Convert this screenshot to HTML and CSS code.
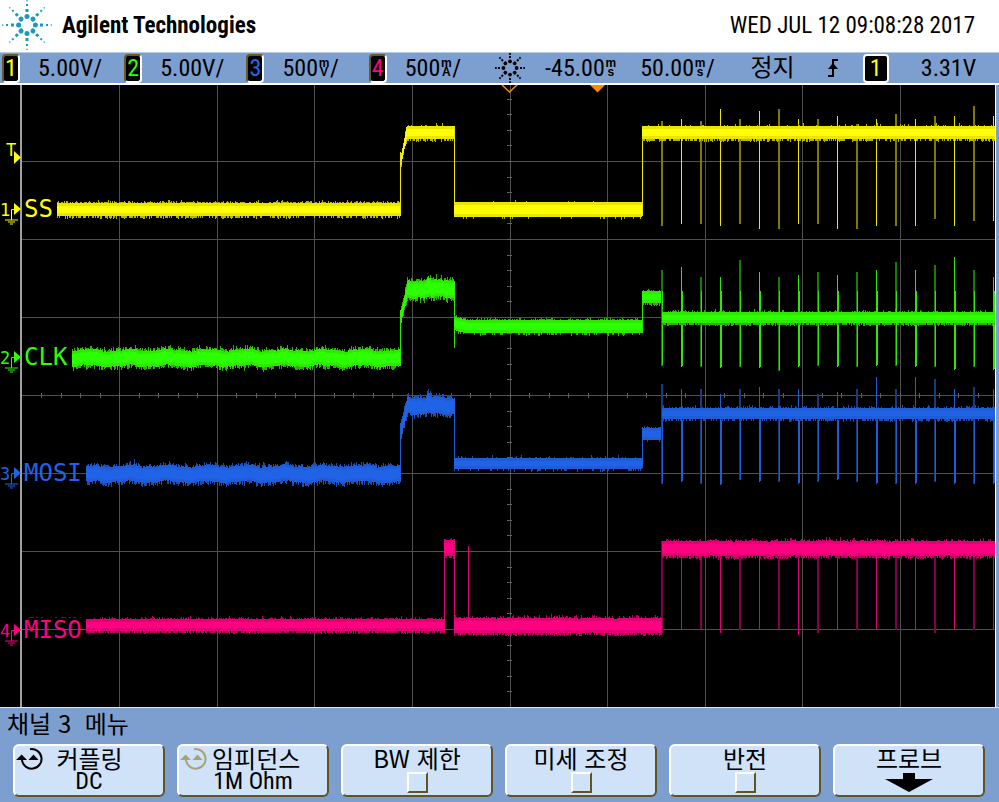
FILE: index.html
```html
<!DOCTYPE html>
<html lang="ko">
<head>
    <meta charset="UTF-8">
    <meta name="viewport" content="width=device-width, initial-scale=1.0">
    <title>Agilent Technologies</title>
    <link rel="stylesheet" href="styles.css">
</head>
<body>
    <header class="header">
        <svg class="logo" viewBox="-25 -25 50 50" aria-hidden="true">
            <defs>
                <g id="ray">
                    <circle cy="-8.4" r="2.5"/>
                    <rect x="-1.5" y="-16" width="3" height="3"/>
                    <rect x="-1" y="-21" width="2" height="2"/>
                    <rect x="-.6" y="-25" width="1.2" height="1.4"/>
                </g>
                <g id="burst">
                    <use href="#ray"/>
                    <use href="#ray" transform="rotate(45)"/>
                    <use href="#ray" transform="rotate(90)"/>
                    <use href="#ray" transform="rotate(135)"/>
                    <use href="#ray" transform="rotate(180)"/>
                    <use href="#ray" transform="rotate(225)"/>
                    <use href="#ray" transform="rotate(270)"/>
                    <use href="#ray" transform="rotate(315)"/>
                </g>
            </defs>
            <use href="#burst"/>
        </svg>
        <h1 class="brand">Agilent Technologies</h1>
        <time class="clock" datetime="2017-07-12T09:08:28">WED JUL 12 09:08:28 2017</time>
    </header>

    <div class="status">
        <div class="channel"><span class="badge ch1">1</span><span>5.00V/</span></div>
        <div class="channel"><span class="badge ch2">2</span><span>5.00V/</span></div>
        <div class="channel"><span class="badge ch3">3</span><span class="reading">500<span class="unit"><span>m</span><span>V</span></span>/</span></div>
        <div class="channel"><span class="badge ch4">4</span><span class="reading">500<span class="unit"><span>m</span><span>A</span></span>/</span></div>
        <svg class="sun" viewBox="-15 -15 30 30" aria-hidden="true">
            <defs>
                <g id="sunray">
                    <circle cy="-6.6" r="1.9"/>
                    <rect x="-1" y="-12" width="2" height="2"/>
                    <rect x="-.9" y="-15" width="1.8" height="1.8"/>
                </g>
            </defs>
            <use href="#sunray"/>
            <use href="#sunray" transform="rotate(45)"/>
            <use href="#sunray" transform="rotate(90)"/>
            <use href="#sunray" transform="rotate(135)"/>
            <use href="#sunray" transform="rotate(180)"/>
            <use href="#sunray" transform="rotate(225)"/>
            <use href="#sunray" transform="rotate(270)"/>
            <use href="#sunray" transform="rotate(315)"/>
        </svg>
        <span class="reading">-45.00<span class="unit"><span>m</span><span>s</span></span></span>
        <span class="reading">50.00<span class="unit"><span>m</span><span>s</span></span>/</span>
        <span>정지</span>
        <svg class="edge" viewBox="0 0 12 18" aria-hidden="true">
            <path d="M11 1H6V17H1" fill="none" stroke="#000" stroke-width="2"/>
            <path d="M6 4L11 10H1Z"/>
        </svg>
        <span class="badge badge-source ch1">1</span>
        <span>3.31V</span>
    </div>

    <main class="screen">
        <svg class="scope" id="scope" viewBox="0 85 995 622">
            <g id="grid"></g>
            <path d="M502 85L509.500 92L517 85" fill="none" stroke="#ff8a00" stroke-width="1.500"/>
            <path d="M590 85H605L597.500 92.500Z" fill="#ff8a00"/>
            <g id="traces" shape-rendering="crispEdges"></g>
            <g id="markers"></g>
        </svg>
    </main>

    <footer class="menu">
        <h2 class="menu-title">채널 3 &nbsp;메뉴</h2>
        <div class="softkeys">
            <button class="softkey" type="button">
                <span class="line line-icon">
                    <svg class="cycle" viewBox="0 0 28 22" aria-hidden="true"><path d="M14 1.200A9.800 9.800 0 1 1 6 12" fill="none" stroke="currentColor" stroke-width="2"/><path d="M0 12L5.700 6.500L11 12ZM12.500 12L17.500 6.500L22.500 12Z" fill="currentColor"/></svg>
                    <span>커플링</span>
                </span>
                <span class="line value">DC</span>
            </button>
            <button class="softkey" type="button">
                <span class="line line-icon">
                    <svg class="cycle cycle-off" viewBox="0 0 28 22" aria-hidden="true"><path d="M14 1.200A9.800 9.800 0 1 1 6 12" fill="none" stroke="currentColor" stroke-width="2"/><path d="M0 12L5.700 6.500L11 12ZM12.500 12L17.500 6.500L22.500 12Z" fill="currentColor"/></svg>
                    <span>임피던스</span>
                </span>
                <span class="line value">1M Ohm</span>
            </button>
            <label class="softkey"><span class="line">BW 제한</span><input class="check" type="checkbox"></label>
            <label class="softkey"><span class="line">미세 조정</span><input class="check" type="checkbox"></label>
            <label class="softkey"><span class="line">반전</span><input class="check" type="checkbox"></label>
            <button class="softkey" type="button">
                <span class="line">프로브</span>
                <svg class="down" viewBox="0 0 48 20" aria-hidden="true"><path d="M18 0H30V6H48L24 19L0 6H18Z"/></svg>
            </button>
        </div>
    </footer>
    <script src="scope.js"></script>
</body>
</html>
```

FILE: styles.css
```css
* {
    box-sizing: border-box;
    margin: 0;
    padding: 0;
}

body {
    background-color: #7c9fcf;
    color: #000;
    font-family: "Roboto Condensed", Roboto, "Noto Sans CJK KR", sans-serif;
    font-size: 24px;
    line-height: 24px;
}

.header {
    display: flex;
    align-items: center;
    height: 52px;
    padding: 0 24px 0 2px;
    background-color: #fff;
    font-size: 23px;
}

.logo {
    align-self: flex-start;
    width: 50px;
    height: 50px;
    fill: #1899bd;
}

.brand {
    margin-left: 10px;
    font-size: 23px;
    font-weight: bold;
}

.clock {
    margin-left: auto;
}

/* Status bar */
.status {
    display: grid;
    grid-template-columns: 122fr 122fr 122fr 122fr 54fr 95fr 110fr 76fr 36fr 58fr 78fr;
    align-items: center;
    height: 33px;
    padding-left: 2px;
    border-top: 1px solid #b5cbe8;
    border-bottom: 2px solid #fff;
}

.channel {
    display: flex;
    align-items: center;
    gap: 18px;
}

.badge {
    display: flex;
    align-items: center;
    justify-content: center;
    width: 18px;
    height: 29px;
    background-color: #000;
    border: 2px solid #fff;
    border-top-color: #6b5a1e;
    border-left-color: #6b5a1e;
    border-radius: 4px;
}

.badge-source {
    width: 26px;
    border-color: #fff;
}

.ch1 { color: #ff0; }
.ch2 { color: #2bff00; }
.ch3 { color: #2468f0; }
.ch4 { color: #ff0080; }

.reading {
    display: flex;
    align-items: center;
}

.unit {
    display: flex;
    flex-direction: column;
    align-items: center;
    width: 12px;
    font-family: "Liberation Sans", sans-serif;
    font-size: 12px;
    font-weight: bold;
    line-height: 9px;
}

.sun {
    width: 30px;
    height: 30px;
    margin-left: 4px;
}

.edge {
    width: 12px;
    height: 18px;
}

/* Waveform area */
.screen {
    padding-right: 3px;
}

.scope {
    display: block;
    width: 100%;
    background-color: #000;
    border-right: 1px solid #fff;
}

.wave-label {
    font-family: "DejaVu Sans Mono", monospace;
    font-size: 24px;
}

.wave-number {
    font-family: "DejaVu Sans Mono", monospace;
    font-size: 17px;
}

/* Softkey menu */
.menu {
    padding: 3px 14px 5px 13px;
    border-top: 1px solid #dbe6f5;
    font-family: "Noto Sans CJK KR", sans-serif;
}

.menu-title {
    margin-left: -6px;
    font-size: 24px;
    font-weight: normal;
    line-height: 24px;
}

.softkeys {
    display: grid;
    grid-template-columns: repeat(6, minmax(0, 1fr));
    gap: 12px;
    margin-top: 9px;
}

.softkey {
    display: flex;
    flex-direction: column;
    align-items: center;
    justify-content: flex-start;
    height: 53px;
    background-color: #cfe2f8;
    border: 2px solid #fff;
    border-right-color: #5f5424;
    border-bottom-color: #5f5424;
    border-radius: 6px;
    color: #000;
    font: inherit;
}

.line {
    height: 22px;
    line-height: 24px;
    white-space: nowrap;
}

.line-icon {
    display: grid;
    grid-template-columns: 28px minmax(max-content, 1fr) 28px;
    gap: 4px;
    width: 100%;
    padding-left: 1px;
}

.value {
    font-family: "Roboto Condensed", Roboto, sans-serif;
    line-height: 26px;
}

.cycle {
    width: 28px;
    height: 22px;
    margin-top: 2px;
}

.cycle-off {
    color: #a8a27c;
}

.check {
    appearance: none;
    width: 21px;
    height: 21px;
    margin-top: 4px;
    background-color: #cfe2f8;
    border: 2px solid #fff;
    border-right-color: #5f5424;
    border-bottom-color: #5f5424;
}

.down {
    width: 48px;
    height: 20px;
    margin-top: 5px;
}
```

FILE: scope.js
```js
const NS = 'http://www.w3.org/2000/svg';
const traces = document.getElementById('traces');
const markers = document.getElementById('markers');

// Small seeded generator so the noise is the same on every load
let seed = 8317;
function random() {
    seed = (seed * 16807) % 2147483647;
    return seed / 2147483647;
}

function add(parent, name, attrs, text) {
    const el = document.createElementNS(NS, name);
    for (const key in attrs) el.setAttribute(key, attrs[key]);
    if (text) el.textContent = text;
    parent.appendChild(el);
}

function stroke(parent, d, color, width = 1) {
    add(parent, 'path', { d, stroke: color, 'stroke-width': width, fill: 'none' });
}

function drawGrid() {
    const grid = document.getElementById('grid');
    let lines = '';
    let ticks = '';
    for (let i = 1; i < 10; i++) {
        lines += `M${Math.round(21.5 + i * 97.6) + 0.5} 85V707`;
    }
    for (let i = 1; i < 8; i++) {
        lines += `M21 ${Math.round(83 + i * 78) + 0.5}H995`;
    }
    for (let i = 1; i < 40; i++) {
        ticks += `M507 ${Math.round(83 + i * 15.6) + 0.5}H512`;
    }
    for (let i = 1; i < 50; i++) {
        ticks += `M${Math.round(21.5 + i * 19.52) + 0.5} 393V398`;
    }
    stroke(grid, lines, '#505050');
    stroke(grid, ticks, '#606060');
    stroke(grid, 'M21 85V707', '#a0a0a0', 2);
}

// A band is a list of [x, top, bottom] points, drawn one column at a time
function drawBand(ch, points, up, down, wave = 0) {
    let noise = '';
    let body = '';
    let core = '';
    for (let p = 0; p < points.length - 1; p++) {
        const [x0, t0, b0] = points[p];
        const [x1, t1, b1] = points[p + 1];
        for (let x = x0; x < x1; x++) {
            const k = (x - x0) / (x1 - x0);
            const shift = wave * (0.7 * Math.sin((x - 60) / 6.2) + 0.3 * Math.sin(x / 2.7));
            const top = Math.round(t0 + (t1 - t0) * k + shift + wave * (random() - 0.5));
            const bottom = Math.round(b0 + (b1 - b0) * k + shift + wave * (random() - 0.5));
            const a = random() < up ? 1 + Math.floor(random() * random() * 3 + wave * random()) : 0;
            const b = random() < down ? 2 + Math.floor(random() * random() * 2 + wave * random()) : 0;
            noise += `M${x + 0.5} ${top - a}V${bottom + b}`;
            body += `M${x + 0.5} ${top}V${bottom}`;
            core += `M${x + 0.5} ${top + 3}V${bottom - 3}`;
        }
    }
    stroke(traces, noise, ch.dim);
    stroke(traces, body, ch.mid);
    stroke(traces, core, ch.color);
}

function drawEdges(ch, edges) {
    stroke(traces, edges.map(([x, a, b]) => `M${x + 0.5} ${a}V${b}`).join(''), ch.mid);
}

// Periodic glitches on the right side: even ones fall between two columns
function drawSpikes(ch, from, tops, level, bottoms) {
    tops.forEach((top, i) => {
        const n = i + from;
        const x = Math.floor(661.5 + n * 19.5);
        const wide = n % 2 === 0;
        const color = wide ? ch.faint : ch.mid;
        stroke(traces, `M${wide ? x + 1 : x + 0.5} ${top}V${bottoms[i]}`, color, wide ? 2 : 1);
        if (ch.tail) {
            stroke(traces, `M${x + 1.5} ${level + ch.tail}V${bottoms[i] - 1}`, ch.mid);
        }
    });
}

function drawMarker(ch, number, y, name, labelY) {
    add(markers, 'text', { x: 0, y: y + 7, fill: ch.color, class: 'wave-number' }, number);
    add(markers, 'path', { d: `M14 ${y - 6}L21 ${y}L14 ${y + 6}Z`, fill: ch.color });
    stroke(markers, `M14 ${y + 0.5}H11.5V${y + 11}M5 ${y + 11}H18M8 ${y + 13}H15M10 ${y + 15}H13`, ch.color);
    add(markers, 'text', { x: 24, y: labelY, fill: ch.color, class: 'wave-label' }, name);
}

const yellow = { color: '#ffff00', mid: '#ebe500', dim: '#b8b200', faint: '#7f7a00' };
const green = { color: '#2bff00', mid: '#2bea00', dim: '#27b400', faint: '#1b7a00', tail: -20 };
const blue = { color: '#2163e6', mid: '#1f5cd8', dim: '#1b4eb0', faint: '#173a80', tail: 6 };
const pink = { color: '#ff0080', mid: '#e40074', dim: '#b8005e', faint: '#85004a' };

drawGrid();

// SS
drawBand(yellow, [[57, 203, 216], [400, 203, 216]], 0.6, 0.5);
drawEdges(yellow, [[400, 152, 216], [454, 126, 216], [642, 126, 216]]);
drawBand(yellow, [[401, 153, 165], [403, 143, 153], [406, 127, 142], [407, 126, 139], [454, 126, 139]], 0.2, 0.5);
drawBand(yellow, [[454, 202, 217], [642, 202, 217]], 0.04, 0.1);
drawSpikes(yellow, 0,
    [121, 119, 121, 109, 119, 111, 109, 119, 119, 116, 124, 119, 114, 119, 116, 116, 106, 116], 132,
    [226, 224, 224, 226, 224, 229, 229, 224, 224, 229, 229, 226, 226, 226, 219, 226, 221, 221]);
drawBand(yellow, [[642, 126, 139], [995, 126, 139]], 0.14, 0.6);

// CLK
drawBand(green, [[72, 350, 366], [400, 350, 366]], 0.6, 0.6, 1.5);
drawEdges(green, [[400, 310, 366], [454, 281, 348], [642, 291, 333], [662, 291, 366]]);
drawBand(green, [[401, 310, 325], [403, 302, 314], [406, 288, 303], [407, 281, 298], [424, 280, 297], [428, 276, 295], [433, 281, 298], [454, 281, 298]], 0.7, 0.5, 2);
drawBand(green, [[454, 317, 330], [460, 318, 332], [468, 320, 333], [642, 320, 333]], 0.5, 0.3);
drawBand(green, [[642, 291, 303], [662, 291, 303]], 0.6, 0.5);
drawSpikes(green, 0,
    [270, 267, 277, 277, 260, 272, 277, 275, 272, 275, 272, 270, 262, 270, 265, 257, 270, 277], 311,
    [366, 367, 367, 368, 367, 368, 371, 367, 366, 367, 367, 366, 366, 367, 367, 370, 367, 370]);
drawBand(green, [[662, 312, 323], [995, 312, 323]], 0.35, 0.75);

// MOSI
drawBand(blue, [[86, 466, 482], [400, 466, 482]], 0.6, 0.6, 1.5);
drawEdges(blue, [[400, 423, 482], [454, 398, 467], [642, 427, 468], [662, 385, 482]]);
drawBand(blue, [[401, 423, 441], [403, 415, 430], [406, 403, 418], [407, 397, 414], [424, 397, 414], [428, 393, 411], [433, 398, 415], [454, 398, 415]], 0.7, 0.5, 2);
drawBand(blue, [[454, 458, 469], [642, 458, 469]], 0.2, 0.25);
drawBand(blue, [[642, 428, 440], [662, 428, 440]], 0.4, 0.1);
drawSpikes(blue, 0,
    [384, 389, 389, 394, 389, 387, 389, 389, 394, 392, 389, 377, 389, 377, 379, 389, 387, 389], 414,
    [484, 482, 484, 485, 480, 482, 482, 484, 482, 480, 482, 484, 484, 484, 482, 484, 484, 484]);
drawBand(blue, [[662, 408, 419], [995, 408, 419]], 0.4, 0.5);

// MISO
drawBand(pink, [[86, 619, 631], [444, 619, 631]], 0.45, 0.7);
drawEdges(pink, [[444, 539, 633], [454, 539, 633], [468, 546, 617]]);
stroke(traces, 'M662 541V633', pink.faint, 2);
drawBand(pink, [[444, 540, 556], [454, 540, 556]], 0.6, 0.6);
drawBand(pink, [[454, 618, 633], [662, 618, 633]], 0.5, 0.7, 0.5);
drawSpikes(pink, 1,
    Array(17).fill(556), 548,
    [629, 629, 633, 630, 629, 629, 635, 633, 630, 630, 629, 630, 629, 633, 629, 630, 629]);
drawBand(pink, [[662, 541, 556], [995, 541, 556]], 0.4, 0.7, 0.5);
stroke(traces, 'M29 617.5H34M36 617.5H38M41 617.5H43M51 617.5H52M55 617.5H57M61 617.5H66M69 617.5H71M73 617.5H76M80 617.5H81', pink.faint);

// Channel and trigger markers
add(markers, 'text', { x: 6, y: 156, fill: yellow.color, class: 'wave-number' }, 'T');
add(markers, 'path', { d: 'M14 151L21 157.5L14 164Z', fill: yellow.color });
drawMarker(yellow, '1', 209, 'SS', 217);
drawMarker(green, '2', 357, 'CLK', 365);
drawMarker(blue, '3', 473, 'MOSI', 481);
drawMarker(pink, '4', 630, 'MISO', 638);
```
